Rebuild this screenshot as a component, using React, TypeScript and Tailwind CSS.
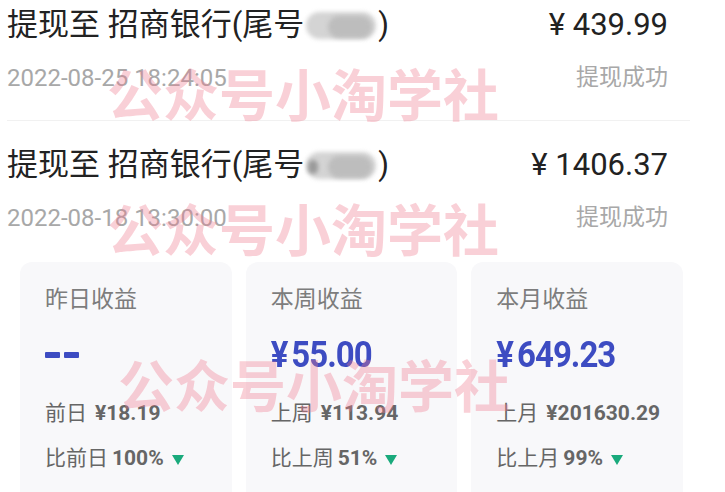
import React from "react";

const latin = "font-['Roboto','Noto_Sans_CJK_SC',sans-serif]";

function Pill({ dark }: { dark?: boolean }) {
  return (
    <span className="relative inline-block w-[70px] h-[27px] mx-[2px] align-middle">
      <span className="absolute inset-0 rounded-full bg-[#d4d4d4] blur-[2px]" />
      <span className="absolute left-[22px] top-[4px] w-[44px] h-[22px] rounded-full bg-[#bdbdbd] blur-[2px]" />
      {dark ? <span className="absolute left-[2px] top-[8px] w-[10px] h-[14px] rounded-full bg-[#9a9a9a] blur-[2px]" /> : null}
    </span>
  );
}

function Row({ amount, date, dark, first }: { amount: string; date: string; dark?: boolean; first?: boolean }) {
  return (
    <div className={first ? "pt-[8px] pb-[27px] border-b border-[#f1f1f1]" : "pt-[27px]"}>
      <div className="flex justify-between items-center h-[34px] pr-[22px]">
        <div className="text-[31px] leading-[34px] text-[#222] flex items-center whitespace-nowrap">
          <span>提现至 招商银行(尾号</span>
          <Pill dark={dark} />
          <span>)</span>
        </div>
        <div className="text-[31px] leading-[34px] text-[#222]">¥ {amount}</div>
      </div>
      <div className="flex justify-between items-center mt-[21px] h-[30px] pr-[22px]">
        <div className="text-[24px] leading-[30px] text-[#a8a8a8]">{date}</div>
        <div className="text-[23px] leading-[30px] text-[#a8a8a8]">提现成功</div>
      </div>
    </div>
  );
}

function Tri() {
  return (
    <svg width="14" height="12" viewBox="0 0 14 12" className="ml-[7px] mt-[3px]">
      <path d="M1 1 H13 L7 11 Z" fill="#1aaa7c" />
    </svg>
  );
}

function Card({ label, value, prevLabel, prevValue, cmpLabel, cmp }: { label: string; value: string; prevLabel: string; prevValue: string; cmpLabel: string; cmp: string }) {
  return (
    <div className="bg-[#f8f8fa] rounded-[12px] h-[240px] pl-[25px] pt-[23px]">
      <div className="text-[23px] leading-[30px] text-[#7d7d7d]">{label}</div>
      <div className="mt-[20px] h-[40px] flex items-center text-[#3d4cc2] font-bold">
        {value === "--" ? (
          <div className="flex gap-[4px]">
            <span className="block w-[15px] h-[6px] bg-[#3d4cc2] rounded-[1px]" />
            <span className="block w-[15px] h-[6px] bg-[#3d4cc2] rounded-[1px]" />
          </div>
        ) : (
          <span className="text-[33px] leading-[40px] tracking-[-1px] scale-y-[1.12] origin-center inline-block">
            <span className="mr-[4px]">¥</span>
            {value}
          </span>
        )}
      </div>
      <div className="mt-[24px] h-[28px] flex items-center text-[21px] leading-[28px] text-[#666]">
        <span>{prevLabel}</span>
        <span className="ml-[8px] font-bold">¥{prevValue}</span>
      </div>
      <div className="mt-[17px] h-[28px] flex items-center text-[21px] leading-[28px] text-[#666]">
        <span>{cmpLabel}</span>
        <span className="ml-[4px] font-bold">{cmp}</span>
        <Tri />
      </div>
    </div>
  );
}

function Watermark({ top, left }: { top: number; left: number }) {
  return (
    <div
      className="absolute text-[56px] leading-[56px] font-bold text-[#f07a8e] opacity-35 whitespace-nowrap pointer-events-none"
      style={{ top, left }}
    >
      公众号小淘学社
    </div>
  );
}

export default function App() {
  return (
    <div className={`relative w-[725px] h-[492px] overflow-hidden bg-white ${latin}`}>
      <div className="pl-[7px] pr-[35px]">
        <Row amount="439.99" date="2022-08-25 18:24:05" first />
        <Row amount="1406.37" date="2022-08-18 13:30:00" dark />
      </div>
      <div className="grid grid-cols-3 gap-[14px] pl-[20px] pr-[42px] pt-[29px]">
        <Card label="昨日收益" value="--" prevLabel="前日" prevValue="18.19" cmpLabel="比前日" cmp="100%" />
        <Card label="本周收益" value="55.00" prevLabel="上周" prevValue="113.94" cmpLabel="比上周" cmp="51%" />
        <Card label="本月收益" value="649.23" prevLabel="上月" prevValue="201630.29" cmpLabel="比上月" cmp="99%" />
      </div>
      <Watermark top={69} left={107} />
      <Watermark top={204} left={107} />
      <Watermark top={360} left={118} />
    </div>
  );
}
